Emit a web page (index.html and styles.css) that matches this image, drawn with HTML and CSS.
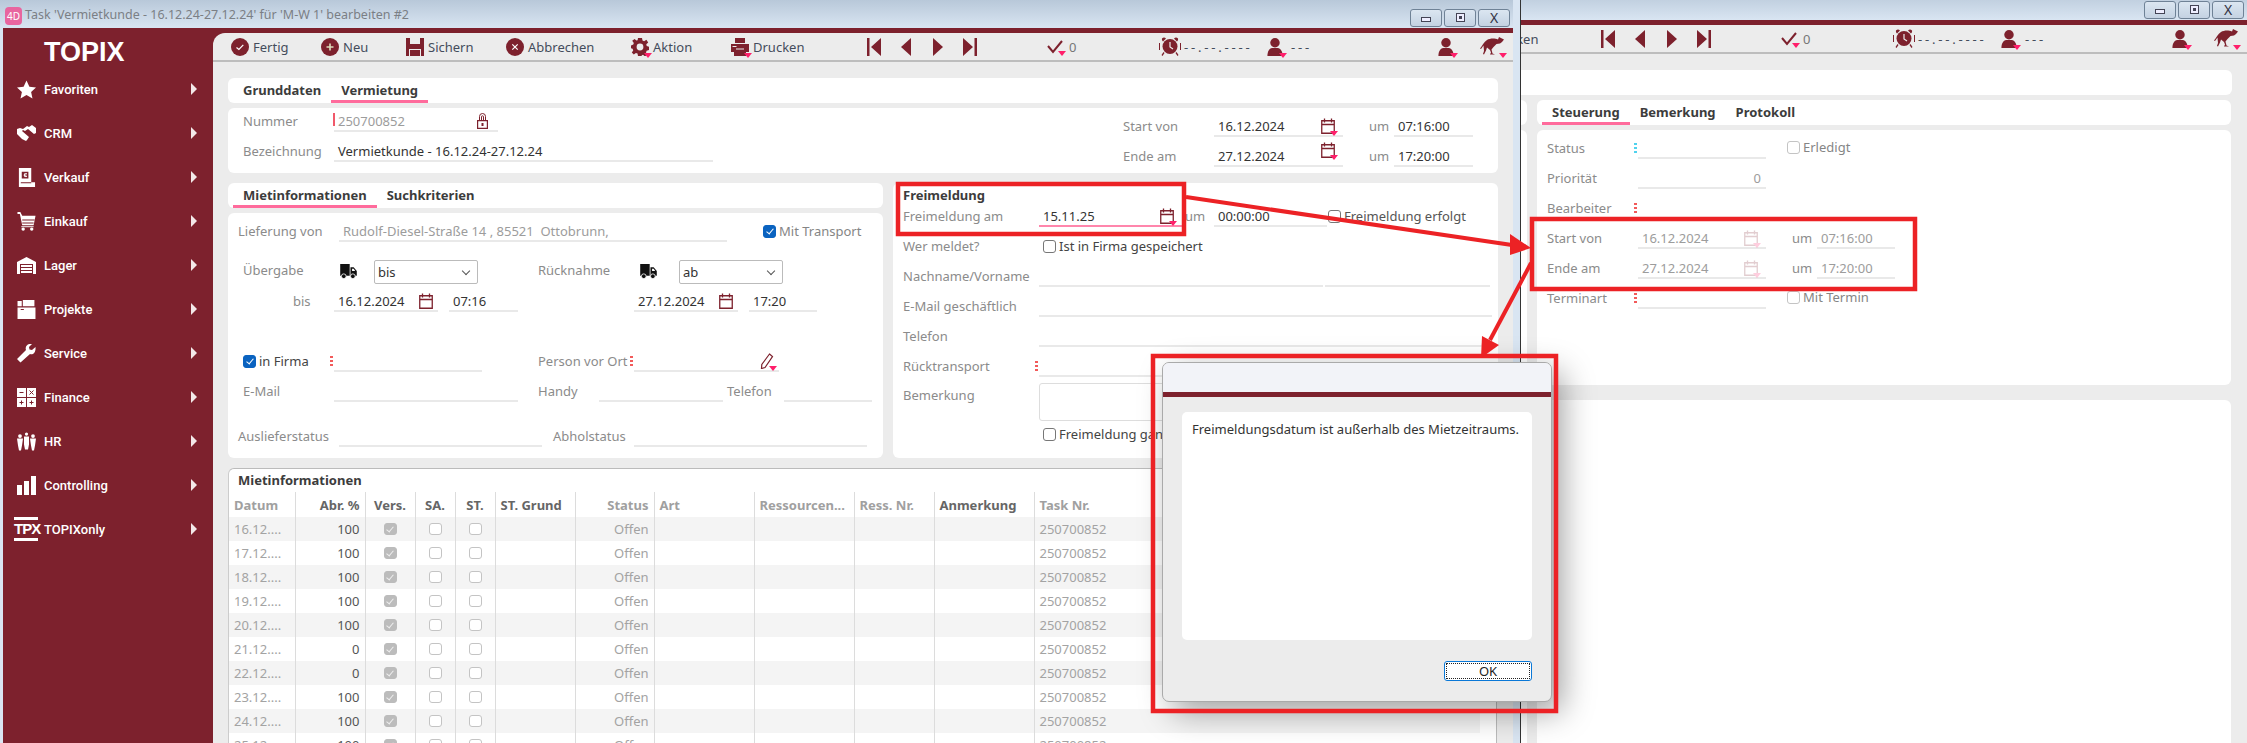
FILE: index.html
```html
<!DOCTYPE html>
<html lang="de">

<head>
    <meta charset="UTF-8">
    <title>TOPIX - Task Vermietkunde</title>
    <link rel="stylesheet" href="styles.css">
</head>

<body>
    <svg class="defs" xmlns="http://www.w3.org/2000/svg">
        <symbol id="i-ok" viewBox="0 0 18 18"><circle cx="9" cy="9" r="9" fill="currentColor"/><path d="M5.5 9.5l2.4 2 4.4-4.6" fill="none" stroke="#fff" stroke-width="1.2"/></symbol>
        <symbol id="i-plus" viewBox="0 0 18 18"><circle cx="9" cy="9" r="9" fill="currentColor"/><path d="M9 5.5v7M5.5 9h7" stroke="#ddb" stroke-width="1.6"/></symbol>
        <symbol id="i-x" viewBox="0 0 18 18"><circle cx="9" cy="9" r="9" fill="currentColor"/><path d="M6.3 6.3l5.4 5.4M11.7 6.3l-5.4 5.4" stroke="#fff" stroke-width="1.2"/></symbol>
        <symbol id="i-save" viewBox="0 0 18 18"><path d="M0 0h18v18H0z" fill="currentColor"/><path d="M4 0h10v6H4zM3 11h12v7h-1v-6H4v6H3z" fill="#ececec"/></symbol>
        <symbol id="i-gear" viewBox="0 0 18 18"><path fill="currentColor" fill-rule="evenodd" d="M7 0h4l.5 2.6 1.6.7L15.400 1.800l1.800 2.600-1.900 1.800.4 1.700 2.300.8v3.400l-2.400.6-.6 1.700 1.500 2.200-2.600 1.800-1.900-1.600-1.600.6L11 18H7l-.5-2.400-1.600-.6L2.800 16.600.8 14.500l1.400-2-.6-1.800L0 10.300V7.400l2.300-.8.500-1.700L1.200 2.800 3.600 1l1.800 1.600L6.600 2.200zM9 5.600a3.400 3.400 0 1 0 0 6.800 3.400 3.400 0 0 0 0-6.800z"/></symbol>
        <symbol id="i-print" viewBox="0 0 18 18"><path fill="currentColor" d="M4 0h10v5H4zM0 6h18v8h-3v4H3v-4H0z"/><path d="M1.500 8.500h4M5 11h8" stroke="#ececec" stroke-width="1.200"/></symbol>
        <symbol id="i-first" viewBox="0 0 14 18"><path fill="currentColor" d="M0 0h2.500v18H0zM14 0v18L4 9z"/></symbol>
        <symbol id="i-prev" viewBox="0 0 10 18"><path fill="currentColor" d="M10 0v18L0 9z"/></symbol>
        <symbol id="i-next" viewBox="0 0 10 18"><path fill="currentColor" d="M0 0v18l10-9z"/></symbol>
        <symbol id="i-last" viewBox="0 0 14 18"><path fill="currentColor" d="M14 0h-2.500v18H14zM0 0v18l10-9z"/></symbol>
        <symbol id="i-check" viewBox="0 0 16 14"><path d="M1 6l5 6 9-11" fill="none" stroke="currentColor" stroke-width="2"/></symbol>
        <symbol id="i-clock" viewBox="0 0 22 19"><path fill="currentColor" d="M3 1.500a3 3 0 0 1 4 0L4 4.500a3 3 0 0 1-1-3zM19 1.500a3 3 0 0 0-4 0l3 3a3 3 0 0 0 1-3zM0 6h1v7H0zM21 6h1v7h-1zM4.500 15l1 1-2 3-1-1zM17.500 15l-1 1 2 3 1-1z"/><circle cx="11" cy="9.500" r="7.500" fill="currentColor"/><path d="M11 5v5l3 2" fill="none" stroke="#ececec" stroke-width="1.200"/></symbol>
        <symbol id="i-person" viewBox="0 0 18 19"><circle cx="9" cy="5" r="5" fill="currentColor"/><path fill="currentColor" d="M1 19c0-5 2-8 5-8.500h6c3 .5 5 3.500 5 8.500z"/></symbol>
        <symbol id="i-roo" viewBox="0 0 24 19"><path fill="currentColor" d="M24 2.500L19 0l-1 2.500c-3-1.500-8-1.500-11 .5C4 5 2 9 0 11.500l1 .5 2.500-3.500L4 14l-1 3 1 .5 2-4 1-3 3 2.500 1 2.500-1 2h5l-2.500-1-1-4 2-2.500 3-3 3.500-.5 2-1.500z"/></symbol>
        <symbol id="i-cal" viewBox="0 0 14 16"><path d="M.75 2.750h12.500v12.500H.75zM.75 6.500h12.500M3.500 .5v4M10.500 .5v4" fill="none" stroke="currentColor" stroke-width="1.300"/></symbol>
        <symbol id="i-lock" viewBox="0 0 11 16"><path d="M2.500 7V3.500a3 3 0 0 1 6 0V7M4.500 7V3.800a1 1 0 0 1 2 0V7" fill="none" stroke="currentColor" stroke-width="1"/><path d="M.6 7.600h9.800v7.800H.6z" fill="#fff" stroke="currentColor" stroke-width="1.200"/><path d="M4.500 10h2v3h-2z" fill="currentColor"/></symbol>
        <symbol id="i-truck" viewBox="0 0 21 19"><path fill="#111" d="M0 0h12v15H0zM13 4h4l4 5v6h-8z"/><circle cx="4.500" cy="15.500" r="3" fill="#111" stroke="#fff"/><circle cx="16" cy="15.500" r="3" fill="#111" stroke="#fff"/><path d="M15 6h2l2 3h-4z" fill="#fff"/></symbol>
        <symbol id="i-pen" viewBox="0 0 14 16"><path d="M9.500 1l3 2.500L5 14.500l-3.500 1 .3-4z" fill="none" stroke="currentColor" stroke-width="1.200"/></symbol>
        <symbol id="s-star" viewBox="0 0 19 18"><path fill="#fff" d="M9.500 0l2.900 6.200 6.600.7-4.900 4.500 1.400 6.600-6-3.400-6 3.400 1.400-6.600L0 6.900l6.600-.7z"/></symbol>
        <symbol id="s-hand" viewBox="0 0 19 17"><path fill="#fff" d="M0 4l3-1 3 1 4-3 2 1 3-2 4 3v5l-2 1-6-5-3 2-2-1-1 1 7 6-2 3-1 1-2-1-2-1-1-1-4-4z"/></symbol>
        <symbol id="s-bill" viewBox="0 0 18 20"><path fill="#fff" d="M1 0h13v15h4v5H1z"/><path fill="#7d212d" d="M4 4h7v7H4zM3 15h11v1H3z"/><path d="M9.500 6H7v3h2.500M6 7.500h3" stroke="#fff" fill="none"/></symbol>
        <symbol id="s-cart" viewBox="0 0 19 20"><path fill="#fff" d="M0 0h3l2 4h14l-2 10H5L2.500 2H0z"/><path fill="#7d212d" d="M5 8h13v1H5zM5 11h12v1H5z"/><circle cx="6" cy="18" r="1.800" fill="#fff"/><circle cx="15" cy="18" r="1.800" fill="#fff"/><path fill="#fff" d="M4 15h13v1H4z"/></symbol>
        <symbol id="s-store" viewBox="0 0 19 17"><path fill="#fff" d="M0 5l9.500-5L19 5v12H0z"/><path fill="#7d212d" d="M3 7h13v10H3z"/><path fill="#fff" d="M4 8h11v2H4zM4 11h11v2H4zM4 14h11v2H4z"/></symbol>
        <symbol id="s-folder" viewBox="0 0 17 18"><path fill="#fff" d="M5 0h11v6H5zM0 1h4v5H0zM0 7h17v11H0z"/><path fill="#7d212d" d="M3 8.500h3v1H3z"/></symbol>
        <symbol id="s-wrench" viewBox="0 0 19 19"><path fill="#fff" d="M18.500 3l-3.500 3-2.500-.6L12 3l3-3c-3-.8-6 1-6.300 4-.1 1 .1 1.500.3 2L0 15l3.500 3.500L13 10c3 1 6-1.500 5.500-7z"/></symbol>
        <symbol id="s-calc" viewBox="0 0 19 19"><path fill="#fff" d="M0 0h9v9H0zM10 0h9v9h-9zM0 10h9v9H0zM10 10h9v9h-9z"/><path d="M2.500 4.500h4M12.500 2.500l4 4M16.500 2.500l-4 4M2.500 14.500h4M4.500 12.500v4M12.500 14.500h4M14.500 12.500v4" stroke="#7d212d"/></symbol>
        <symbol id="s-people" viewBox="0 0 19 18"><circle cx="9.500" cy="1.600" r="1.600" fill="#fff"/><circle cx="3" cy="3.600" r="1.900" fill="#fff"/><circle cx="16" cy="3.600" r="1.900" fill="#fff"/><path fill="#fff" d="M0 6h6l-1 7-1 5H2l-1-5zM13 6h6l-1 7-1 5h-2l-1-5zM7 4h5v8l-1 5H8l-1-5z"/></symbol>
        <symbol id="s-bars" viewBox="0 0 19 19"><path fill="#fff" d="M0 9h5v10H0zM7 5h5v14H7zM14 0h5v19h-5z"/></symbol>
    </svg>

    <div class="window back">
        <div class="titlebar">
            <div class="win-buttons">
                <span class="win-btn"><i class="g-min"></i></span>
                <span class="win-btn"><i class="g-max"></i></span>
                <span class="win-btn"><i class="g-close">X</i></span>
            </div>
        </div>
        <div class="frame">
            <div class="main">
                <div class="toolbar">
                    <span class="tool"></span><span class="tool"></span><span class="tool"></span><span class="tool"></span><span class="tool"></span>
                    <span class="tool"><span class="mk"><svg class="ico"><use href="#i-print"/></svg></span><span>Drucken</span></span>
                    <span class="tool"><svg class="ico n14"><use href="#i-first"/></svg></span>
                    <span class="tool"><svg class="ico n10"><use href="#i-prev"/></svg></span>
                    <span class="tool"><svg class="ico n10"><use href="#i-next"/></svg></span>
                    <span class="tool"><svg class="ico n14"><use href="#i-last"/></svg></span>
                    <span class="tool gap6"><span class="mk"><svg class="ico c16"><use href="#i-check"/></svg></span><span class="zero">0</span></span>
                    <span class="tool gap3"><svg class="ico k22"><use href="#i-clock"/></svg><span class="dash">--.--.----</span></span>
                    <span class="tool gap7"><span class="mk"><svg class="ico"><use href="#i-person"/></svg></span><span class="dash">---</span></span>
                    <span class="tool"><span class="mk"><svg class="ico"><use href="#i-person"/></svg></span></span>
                    <span class="tool"><span class="mk"><svg class="ico r24"><use href="#i-roo"/></svg></span></span>
                </div>
                <div class="content">
                    <div class="panel tabs-empty"></div>
                    <div class="back-cols">
                        <div class="panel tabs-empty"></div>
                        <div class="panel tabs">
                            <span class="tab on">Steuerung</span><span class="tab">Bemerkung</span><span class="tab">Protokoll</span>
                        </div>
                        <div class="panel back-form-left"></div>
                        <div class="panel back-form">
                            <div class="row br-a"><span class="lbl lbl-dots">Status<i class="dots cyan"></i></span><span class="field"></span><span></span><label class="chk"><i class="box"></i>Erledigt</label></div>
                            <div class="row br-a"><span class="lbl">Priorität</span><span class="field end muted">0</span></div>
                            <div class="row br-a"><span class="lbl lbl-dots">Bearbeiter<i class="dots"></i></span><span class="field"></span></div>
                            <div class="row br-b"><span class="lbl">Start von</span><span class="field muted">16.12.2024<span class="mk faint"><svg class="ico cal"><use href="#i-cal"/></svg></span></span><span class="lbl um-l">um</span><span class="field muted">07:16:00</span></div>
                            <div class="row br-b"><span class="lbl">Ende am</span><span class="field muted">27.12.2024<span class="mk faint"><svg class="ico cal"><use href="#i-cal"/></svg></span></span><span class="lbl um-l">um</span><span class="field muted">17:20:00</span></div>
                            <div class="row br-a"><span class="lbl lbl-dots">Terminart<i class="dots"></i></span><span class="field"></span><span></span><label class="chk"><i class="box"></i>Mit Termin</label></div>
                        </div>
                        <div class="panel back-low"></div>
                        <div class="panel back-low"></div>
                    </div>
                </div>
            </div>
        </div>
    </div>

    <div class="window front">
        <div class="titlebar">
            <span class="app-icon">4D</span>
            <span class="title-text">Task 'Vermietkunde - 16.12.24-27.12.24' für 'M-W 1' bearbeiten #2</span>
            <div class="win-buttons">
                <span class="win-btn"><i class="g-min"></i></span>
                <span class="win-btn"><i class="g-max"></i></span>
                <span class="win-btn"><i class="g-close">X</i></span>
            </div>
        </div>
        <div class="frame">
            <aside class="sidebar">
                <div class="logo">TOPIX</div>
                <ul class="menu">
                    <li><svg class="side-ico"><use href="#s-star"/></svg><span>Favoriten</span><i class="arrow"></i></li>
                    <li><svg class="side-ico"><use href="#s-hand"/></svg><span>CRM</span><i class="arrow"></i></li>
                    <li><svg class="side-ico"><use href="#s-bill"/></svg><span>Verkauf</span><i class="arrow"></i></li>
                    <li><svg class="side-ico"><use href="#s-cart"/></svg><span>Einkauf</span><i class="arrow"></i></li>
                    <li><svg class="side-ico"><use href="#s-store"/></svg><span>Lager</span><i class="arrow"></i></li>
                    <li><svg class="side-ico"><use href="#s-folder"/></svg><span>Projekte</span><i class="arrow"></i></li>
                    <li><svg class="side-ico"><use href="#s-wrench"/></svg><span>Service</span><i class="arrow"></i></li>
                    <li><svg class="side-ico"><use href="#s-calc"/></svg><span>Finance</span><i class="arrow"></i></li>
                    <li><svg class="side-ico"><use href="#s-people"/></svg><span>HR</span><i class="arrow"></i></li>
                    <li><svg class="side-ico"><use href="#s-bars"/></svg><span>Controlling</span><i class="arrow"></i></li>
                    <li><span class="tpx">TPX</span><span>TOPIXonly</span><i class="arrow"></i></li>
                </ul>
            </aside>
            <div class="main">
                <div class="toolbar">
                    <span class="tool"><svg class="ico"><use href="#i-ok"/></svg><span>Fertig</span></span>
                    <span class="tool"><svg class="ico"><use href="#i-plus"/></svg><span>Neu</span></span>
                    <span class="tool"><svg class="ico"><use href="#i-save"/></svg><span>Sichern</span></span>
                    <span class="tool"><svg class="ico"><use href="#i-x"/></svg><span>Abbrechen</span></span>
                    <span class="tool"><span class="mk"><svg class="ico"><use href="#i-gear"/></svg></span><span>Aktion</span></span>
                    <span class="tool"><span class="mk"><svg class="ico"><use href="#i-print"/></svg></span><span>Drucken</span></span>
                    <span class="tool"><svg class="ico n14"><use href="#i-first"/></svg></span>
                    <span class="tool"><svg class="ico n10"><use href="#i-prev"/></svg></span>
                    <span class="tool"><svg class="ico n10"><use href="#i-next"/></svg></span>
                    <span class="tool"><svg class="ico n14"><use href="#i-last"/></svg></span>
                    <span class="tool gap6"><span class="mk"><svg class="ico c16"><use href="#i-check"/></svg></span><span class="zero">0</span></span>
                    <span class="tool gap3"><svg class="ico k22"><use href="#i-clock"/></svg><span class="dash">--.--.----</span></span>
                    <span class="tool gap7"><span class="mk"><svg class="ico"><use href="#i-person"/></svg></span><span class="dash">---</span></span>
                    <span class="tool"><span class="mk"><svg class="ico"><use href="#i-person"/></svg></span></span>
                    <span class="tool"><span class="mk"><svg class="ico r24"><use href="#i-roo"/></svg></span></span>
                </div>
                <div class="content">
                    <div class="panel tabs">
                        <span class="tab">Grunddaten</span><span class="tab on">Vermietung</span>
                    </div>
                    <div class="panel head">
                        <div class="head-left">
                            <div class="row hl-a"><span class="lbl">Nummer</span><span class="field muted red-bar">250700852<svg class="ico lock"><use href="#i-lock"/></svg></span></div>
                            <div class="row hl-b"><span class="lbl">Bezeichnung</span><span class="field">Vermietkunde - 16.12.24-27.12.24</span></div>
                        </div>
                        <div class="head-right">
                            <div class="row hr"><span class="lbl">Start von</span><span class="field">16.12.2024<span class="mk"><svg class="ico cal"><use href="#i-cal"/></svg></span></span><span class="lbl um-l">um</span><span class="field">07:16:00</span></div>
                            <div class="row hr"><span class="lbl">Ende am</span><span class="field">27.12.2024<span class="mk cal-up"><svg class="ico cal"><use href="#i-cal"/></svg></span></span><span class="lbl um-l">um</span><span class="field">17:20:00</span></div>
                        </div>
                    </div>
                    <div class="split">
                        <div class="split-left">
                            <div class="panel tabs">
                                <span class="tab on">Mietinformationen</span><span class="tab">Suchkriterien</span>
                            </div>
                            <div class="panel miet">
                                <div class="row m-a"><span class="lbl">Lieferung von</span><span class="field muted">Rudolf-Diesel-Straße 14 , 85521&nbsp; Ottobrunn,</span><span></span><label class="chk"><i class="box on"></i><span class="lbl-c">Mit Transport</span></label></div>
                                <div class="row m-b"><span class="lbl">Übergabe</span><svg class="ico truck"><use href="#i-truck"/></svg><span class="select">bis<i class="chev"></i></span><span></span><span class="lbl">Rücknahme</span><svg class="ico truck"><use href="#i-truck"/></svg><span class="select">ab<i class="chev"></i></span></div>
                                <div class="row m-c"><span class="lbl bis-l">bis</span><span class="field">16.12.2024<span class="mk nomark"><svg class="ico cal"><use href="#i-cal"/></svg></span></span><span></span><span class="field">07:16</span><span></span><span class="field">27.12.2024<span class="mk nomark"><svg class="ico cal"><use href="#i-cal"/></svg></span></span><span></span><span class="field">17:20</span></div>
                                <div class="row m-d"><span class="lbl lbl-dots"><label class="chk"><i class="box on"></i>in Firma</label><i class="dots"></i></span><span class="field"></span><span></span><span class="lbl lbl-dots">Person vor Ort<i class="dots"></i></span><span class="field end"><span class="mk"><svg class="ico pen"><use href="#i-pen"/></svg></span></span></div>
                                <div class="row m-e"><span class="lbl">E-Mail</span><span class="field"></span><span></span><span class="lbl">Handy</span><span class="field"></span><span></span><span class="lbl">Telefon</span><span class="field"></span></div>
                                <div class="row m-f"><span class="lbl">Auslieferstatus</span><span class="field"></span><span></span><span class="lbl">Abholstatus</span><span class="field"></span></div>
                            </div>
                        </div>
                        <div class="panel frei">
                            <div class="frei-title">Freimeldung</div>
                            <div class="row f-a"><span class="lbl">Freimeldung am</span><span class="field pink">15.11.25<span class="mk"><svg class="ico cal"><use href="#i-cal"/></svg></span></span><span class="lbl">um</span><span class="field">00:00:00</span><label class="chk"><i class="box"></i><span class="lbl-d">Freimeldung erfolgt</span></label></div>
                            <div class="row f-b"><span class="lbl">Wer meldet?</span><label class="chk chk-in"><i class="box"></i>Ist in Firma gespeichert</label></div>
                            <div class="row f-c"><span class="lbl">Nachname/Vorname</span><span class="field"></span><span class="field"></span></div>
                            <div class="row f-b"><span class="lbl">E-Mail geschäftlich</span><span class="field"></span></div>
                            <div class="row f-b"><span class="lbl">Telefon</span><span class="field"></span></div>
                            <div class="row f-b"><span class="lbl lbl-dots">Rücktransport<i class="dots"></i></span><span class="field"></span></div>
                            <div class="row f-d"><span class="lbl">Bemerkung</span><span class="area"></span></div>
                            <div class="row f-e"><span class="lbl"></span><label class="chk chk-in"><i class="box"></i>Freimeldung ganz</label></div>
                        </div>
                    </div>
                    <div class="table-panel">
                        <div class="table-title">Mietinformationen</div>
                        <table class="grid-table">
                            <colgroup>
                                <col class="c66"><col class="c70"><col class="c50"><col class="c40"><col class="c40"><col class="c80"><col class="c79"><col class="c100"><col class="c100"><col class="c80"><col class="c100"><col>
                            </colgroup>
                            <thead>
                                <tr><th class="light">Datum</th><th class="r">Abr. %</th><th class="m">Vers.</th><th class="m">SA.</th><th class="m">ST.</th><th>ST. Grund</th><th class="r light">Status</th><th class="light">Art</th><th class="light">Ressourcen...</th><th class="light">Ress. Nr.</th><th>Anmerkung</th><th class="light">Task Nr.</th></tr>
                            </thead>
                            <tbody>
                                <tr><td>16.12....</td><td class="r dk">100</td><td class="m"><i class="cb on"></i></td><td class="m"><i class="cb"></i></td><td class="m"><i class="cb"></i></td><td></td><td class="r">Offen</td><td></td><td></td><td></td><td></td><td>250700852</td></tr>
                                <tr><td>17.12....</td><td class="r dk">100</td><td class="m"><i class="cb on"></i></td><td class="m"><i class="cb"></i></td><td class="m"><i class="cb"></i></td><td></td><td class="r">Offen</td><td></td><td></td><td></td><td></td><td>250700852</td></tr>
                                <tr><td>18.12....</td><td class="r dk">100</td><td class="m"><i class="cb on"></i></td><td class="m"><i class="cb"></i></td><td class="m"><i class="cb"></i></td><td></td><td class="r">Offen</td><td></td><td></td><td></td><td></td><td>250700852</td></tr>
                                <tr><td>19.12....</td><td class="r dk">100</td><td class="m"><i class="cb on"></i></td><td class="m"><i class="cb"></i></td><td class="m"><i class="cb"></i></td><td></td><td class="r">Offen</td><td></td><td></td><td></td><td></td><td>250700852</td></tr>
                                <tr><td>20.12....</td><td class="r dk">100</td><td class="m"><i class="cb on"></i></td><td class="m"><i class="cb"></i></td><td class="m"><i class="cb"></i></td><td></td><td class="r">Offen</td><td></td><td></td><td></td><td></td><td>250700852</td></tr>
                                <tr><td>21.12....</td><td class="r dk">0</td><td class="m"><i class="cb on"></i></td><td class="m"><i class="cb"></i></td><td class="m"><i class="cb"></i></td><td></td><td class="r">Offen</td><td></td><td></td><td></td><td></td><td>250700852</td></tr>
                                <tr><td>22.12....</td><td class="r dk">0</td><td class="m"><i class="cb on"></i></td><td class="m"><i class="cb"></i></td><td class="m"><i class="cb"></i></td><td></td><td class="r">Offen</td><td></td><td></td><td></td><td></td><td>250700852</td></tr>
                                <tr><td>23.12....</td><td class="r dk">100</td><td class="m"><i class="cb on"></i></td><td class="m"><i class="cb"></i></td><td class="m"><i class="cb"></i></td><td></td><td class="r">Offen</td><td></td><td></td><td></td><td></td><td>250700852</td></tr>
                                <tr><td>24.12....</td><td class="r dk">100</td><td class="m"><i class="cb on"></i></td><td class="m"><i class="cb"></i></td><td class="m"><i class="cb"></i></td><td></td><td class="r">Offen</td><td></td><td></td><td></td><td></td><td>250700852</td></tr>
                                <tr><td>25.12....</td><td class="r dk">100</td><td class="m"><i class="cb on"></i></td><td class="m"><i class="cb"></i></td><td class="m"><i class="cb"></i></td><td></td><td class="r">Offen</td><td></td><td></td><td></td><td></td><td>250700852</td></tr>
                            </tbody>
                        </table>
                    </div>
                </div>
            </div>
        </div>
    </div>

    <div class="dialog">
        <div class="dialog-head"></div>
        <div class="dialog-band"></div>
        <div class="dialog-body">
            <div class="dialog-msg">Freimeldungsdatum ist außerhalb des Mietzeitraums.</div>
            <div class="dialog-actions"><button class="ok-btn"><span>OK</span></button></div>
        </div>
    </div>

    <!-- red annotations drawn on top of the screenshot -->
    <svg class="annot" viewBox="0 0 2247 743">
        <rect x="898" y="184" width="286" height="50"/>
        <rect x="1532" y="219" width="383" height="70"/>
        <rect x="1153" y="356" width="403" height="355"/>
        <line x1="1186" y1="197" x2="1512" y2="245"/>
        <polygon class="head" points="1531,248 1510,234 1510,255"/>
        <line x1="1531" y1="263" x2="1490" y2="340"/>
        <polygon class="head" points="1481,358 1482,336 1499,345"/>
    </svg>
</body>

</html>
```
FILE: styles.css
```css
* {
    box-sizing: border-box;
}

body {
    margin: 0;
    height: 743px;
    overflow: hidden;
    position: relative;
    background: #ececec;
    font-family: "Noto Sans", "DejaVu Sans", sans-serif;
    font-size: 13px;
    color: #333;
}

.defs {
    position: absolute;
    width: 0;
    height: 0;
}

/* windows */
.window {
    position: absolute;
    width: 1513px;
    height: 751px;
    display: flex;
    flex-direction: column;
    overflow: hidden;
    background: #7d212d;
}

.window.front {
    left: 0;
    top: 0;
    height: 743px;
    box-shadow: 7px 0 0 #d9e5f2, 8px 0 0 #333;
}

.window.front {
    overflow: visible;
}

.window.back {
    left: 734px;
    top: -8px;
}

.titlebar {
    height: 28px;
    flex: none;
    display: flex;
    align-items: center;
    padding-left: 5px;
    background: linear-gradient(#b8c8d9, #d9e5f2);
}

.app-icon {
    width: 17px;
    height: 18px;
    margin-top: 3px;
    border-radius: 4px;
    background: #e8659f;
    color: #fff;
    font-size: 10px;
    line-height: 18px;
    text-align: center;
}

.title-text {
    margin-left: 3px;
    color: #7b7f85;
    font-size: 12.5px;
}

.win-buttons {
    margin-left: auto;
    margin-right: 3px;
    margin-top: 3px;
    display: flex;
    gap: 2px;
    align-items: flex-start;
    height: 22px;
}

.win-btn {
    width: 32px;
    height: 18px;
    border: 1px solid #6f8296;
    border-radius: 3px;
    background: linear-gradient(#dbe6f1, #c4d2e2);
    display: flex;
    align-items: center;
    justify-content: center;
    margin-top: 4px;
}

.g-min {
    width: 10px;
    height: 5px;
    margin-top: 4px;
    border: 1px solid #445;
    background: #eef;
}

.g-max {
    width: 9px;
    height: 9px;
    border: 1px solid #445;
    background: linear-gradient(#445, #445) center / 3px 3px no-repeat #eef;
}

.g-close {
    font-style: normal;
    font-size: 14px;
    line-height: 14px;
    color: #334;
}

.back .titlebar {
    padding-left: 0;
}

.frame {
    flex: 1;
    min-height: 0;
    display: flex;
    padding-top: 5px;
    background: #7d212d;
}

.front .frame {
    border-left: 3px solid #d9e5f2;
}

.back .frame {
    padding-left: 213px;
}

/* sidebar */
.sidebar {
    width: 210px;
    flex: none;
    color: #fff;
}

.logo {
    height: 34px;
    padding: 5px 0 0 41px;
    font-family: "Liberation Sans", sans-serif;
    font-weight: bold;
    font-size: 27px;
    line-height: 29px;
}

.menu {
    list-style: none;
    margin: 0;
    padding: 0;
}

.menu li {
    height: 44px;
    display: flex;
    align-items: center;
    font-family: Roboto, sans-serif;
    font-weight: 500;
    font-size: 13px;
    padding-left: 14px;
}

.side-ico {
    width: 19px;
    height: 19px;
    margin-right: 8px;
    flex: none;
}

.tpx {
    width: 24px;
    margin: 0 6px 0 -3px;
    border-top: 3px solid #fff;
    border-bottom: 3px solid #fff;
    font-family: "Liberation Sans", sans-serif;
    font-weight: bold;
    font-size: 15px;
    line-height: 18px;
    letter-spacing: -1px;
}

.arrow {
    margin-left: auto;
    margin-right: 16px;
    border-left: 6px solid #f3e8e8;
    border-top: 6px solid transparent;
    border-bottom: 6px solid transparent;
}

/* main area */
.main {
    flex: 1;
    min-width: 0;
    display: flex;
    flex-direction: column;
    background: #ececec;
    border-top-left-radius: 12px;
}

.toolbar {
    height: 29px;
    flex: none;
    padding-left: 18px;
    display: grid;
    grid-template-columns: 90px 85px 100px 125px 100px 136px 34px 32px 30px 84px 112px 107px 171px 43px auto;
    align-items: center;
    border-bottom: 2px solid #bdbdbd;
    color: #444c5c;
    font-size: 13px;
}

.tool {
    display: flex;
    align-items: center;
    gap: 4px;
    height: 20px;
}

.gap3 {
    gap: 3px;
}

.gap6 {
    gap: 6px;
}

.gap7 {
    gap: 7px;
}

.zero {
    color: #777;
}

.dash {
    letter-spacing: 2.8px;
}

.ico {
    width: 18px;
    height: 18px;
    flex: none;
    color: #7d212d;
    display: block;
}

.ico.n14 {
    width: 14px;
}

.ico.n10 {
    width: 10px;
}

.ico.c16 {
    width: 16px;
    height: 14px;
}

.ico.k22 {
    width: 22px;
    height: 19px;
}

.ico.r24 {
    width: 24px;
    height: 19px;
}

.ico.cal {
    width: 14px;
    height: 16px;
}

.ico.lock {
    width: 11px;
    height: 16px;
}

.ico.truck {
    width: 21px;
    height: 15px;
    margin-bottom: 5px;
}

.ico.pen {
    width: 14px;
    height: 16px;
}

/* small pink drop marker on icons */
.mk {
    position: relative;
    display: block;
    flex: none;
}

.mk::after {
    content: "";
    position: absolute;
    right: -3px;
    bottom: -2px;
    border-top: 5px solid #ff1f6b;
    border-left: 4px solid transparent;
    border-right: 4px solid transparent;
}

.mk.nomark::after {
    display: none;
}

.mk.faint {
    opacity: .22;
}

.mk.cal-up {
    margin-bottom: 12px;
}

.content {
    flex: 1;
    min-height: 0;
    padding: 16px 15px 0;
    overflow: hidden;
}

.panel {
    background: #fff;
    border-radius: 6px;
}

.tabs,
.tabs-empty {
    height: 25px;
    padding-left: 5px;
    display: flex;
}

.tabs-empty {
    margin-bottom: 5px;
}

.tabs {
    margin-bottom: 5px;
}

.tab {
    padding: 0 10px;
    height: 25px;
    line-height: 25px;
    font-weight: bold;
    color: #3c3c3c;
}

.tab.on {
    border-bottom: 3px solid #ff6b9c;
}

.head {
    height: 65px;
    display: flex;
    justify-content: space-between;
    padding: 0 25px 0 15px;
    margin-bottom: 10px;
}

.row {
    display: grid;
    align-items: end;
}

.lbl {
    height: 20px;
    padding-bottom: 2px;
    display: flex;
    align-items: center;
    color: #8b8b8b;
    white-space: nowrap;
}

.lbl-c {
    color: #858585;
}

.lbl-d {
    color: #555;
}

.lbl-dots {
    justify-content: space-between;
    padding-right: 1px;
}

.dots {
    width: 3px;
    height: 10px;
    background: repeating-linear-gradient(#f25a5a 0 2px, transparent 2px 4px);
}

.dots.cyan {
    background: repeating-linear-gradient(#4fd2ee 0 2px, transparent 2px 4px);
}

.field {
    height: 20px;
    padding: 0 5px 0 4px;
    display: flex;
    align-items: center;
    justify-content: space-between;
    border-bottom: 2px solid #e9e9e9;
    white-space: nowrap;
    color: #333;
}

.field.end {
    justify-content: flex-end;
}

.field.pink {
    border-bottom-color: #ff86ac;
}

.field .mk {
    margin-right: 3px;
}

.field.pink .mk {
    margin-right: 5px;
}

.field .mk.nomark,
.field.end .mk {
    margin-right: 0;
}

.field.red-bar {
    position: relative;
    padding-right: 10px;
}

.field.red-bar::before {
    content: "";
    position: absolute;
    left: -1px;
    top: 1px;
    width: 2px;
    height: 13px;
    background: #f1596a;
}

.muted {
    color: #9c9c9c;
}

.field.muted {
    color: #9c9c9c;
}

.hl-a {
    margin-top: 4px;
    grid-template-columns: 91px 164px;
}

.hl-b {
    margin-top: 10px;
    grid-template-columns: 91px 379px;
}

.head-right {
    padding-top: 9px;
}

.hr {
    grid-template-columns: 91px 129px 51px 79px;
    margin-bottom: 10px;
}

.um-l {
    padding-left: 26px;
}

.split {
    display: flex;
    gap: 10px;
    margin-bottom: 10px;
}

.split-left {
    width: 655px;
}

.miet {
    height: 245px;
    padding: 9px 0 0 10px;
}

.m-a {
    grid-template-columns: 101px 388px 36px auto;
}

.m-b,
.m-c,
.m-d,
.m-e {
    margin-left: 5px;
}

.m-b {
    margin-top: 18px;
    grid-template-columns: 95px 36px 104px 60px 100px 41px 104px;
}

.m-b .lbl {
    margin-bottom: 3px;
}

.m-c {
    margin-top: 8px;
    grid-template-columns: 91px 104px 11px 69px 116px 104px 11px 68px;
}

.bis-l {
    padding-left: 50px;
}

.m-d {
    margin-top: 40px;
    grid-template-columns: 91px 148px 56px 96px 145px;
}

.m-e {
    margin-top: 10px;
    grid-template-columns: 91px 184px 20px 61px 124px 4px 57px 88px;
}

.m-f {
    margin-top: 25px;
    grid-template-columns: 101px 203px 11px 81px 233px;
}

.select {
    height: 24px;
    padding-left: 3px;
    display: flex;
    align-items: center;
    justify-content: space-between;
    border: 1px solid #bbb;
    border-radius: 2px;
    color: #333;
}

.chev {
    width: 6px;
    height: 6px;
    margin: -3px 8px 0 0;
    border-right: 1px solid #555;
    border-bottom: 1px solid #555;
    transform: rotate(45deg);
}

.chk {
    height: 20px;
    padding-bottom: 2px;
    display: flex;
    align-items: center;
    gap: 3px;
    color: #444;
    white-space: nowrap;
}

.lbl .chk {
    height: 18px;
    padding-bottom: 0;
}

.chk-in {
    margin-left: 4px;
}

.box {
    width: 13px;
    height: 13px;
    flex: none;
    border: 1px solid #777;
    border-radius: 3px;
    background: #fff;
}

.box.on {
    border-color: #0a63c0;
    background: #0a63c0;
    position: relative;
}

.box.on::after {
    content: "";
    position: absolute;
    left: 3.5px;
    top: 1.5px;
    width: 3px;
    height: 6px;
    border-right: 1px solid #fff;
    border-bottom: 1px solid #fff;
    transform: rotate(40deg);
}

/* freimeldung */
.frei {
    width: 605px;
    height: 275px;
    padding-left: 10px;
}

.frei-title {
    height: 24px;
    line-height: 24px;
    font-weight: bold;
    color: #3c3c3c;
}

.f-a {
    grid-template-columns: 136px 145px 30px 113px auto;
}

.f-a .chk {
    margin-left: 1px;
}

.f-a .lbl:nth-child(3) {
    padding-left: 1px;
}

.f-b {
    margin-top: 10px;
    grid-template-columns: 136px 453px;
}

.f-c {
    margin-top: 10px;
    grid-template-columns: 136px 284px 167px;
}

.f-c .field:last-child {
    margin-left: 2px;
}

.f-d {
    margin-top: 6px;
    grid-template-columns: 136px 452px;
    align-items: start;
}

.f-d .lbl {
    margin-top: 3px;
}

.area {
    height: 38px;
    border: 1px solid #ddd;
    border-radius: 3px;
}

.f-e {
    margin-top: 4px;
    grid-template-columns: 136px auto;
}

/* table */
.table-panel {
    width: 1269px;
    height: 300px;
    background: #fff;
    border-top: 1px solid #bbb;
    border-left: 1px solid #ccc;
    border-right: 1px solid #bbb;
    border-top-left-radius: 6px;
}

.table-title {
    height: 23px;
    line-height: 23px;
    padding-left: 9px;
    font-weight: bold;
    color: #3c3c3c;
}

.grid-table {
    width: 1251px;
    table-layout: fixed;
    border-collapse: collapse;
}

.c66 { width: 66px; }
.c70 { width: 70px; }
.c50 { width: 50px; }
.c40 { width: 40px; }
.c80 { width: 80px; }
.c79 { width: 79px; }
.c100 { width: 100px; }

.grid-table th,
.grid-table td {
    padding: 0 5px;
    border-left: 1px solid #dcdcdc;
    text-align: left;
    white-space: nowrap;
    overflow: hidden;
}

.grid-table th:first-child,
.grid-table td:first-child {
    border-left: 0;
}

.grid-table th {
    height: 25px;
    color: #666;
    font-weight: bold;
}

.grid-table th.light {
    color: #a0a0a0;
}

.grid-table td {
    height: 24px;
    color: #a3a3a3;
}

.grid-table tbody tr:nth-child(odd) {
    background: #f4f4f4;
}

.grid-table .r {
    text-align: right;
}

.grid-table .m {
    text-align: center;
    padding: 0;
}

.grid-table td.dk {
    color: #555;
}

.cb {
    display: inline-block;
    width: 13px;
    height: 12px;
    margin-top: 4px;
    border: 1px solid #c4c4c4;
    border-radius: 3px;
    background: #fff;
}

.cb.on {
    background: #bcbcbc;
    border-color: #bcbcbc;
    position: relative;
}

.cb.on::after {
    content: "";
    position: absolute;
    left: 3.5px;
    top: 1px;
    width: 3px;
    height: 6px;
    border-right: 1px solid #eee;
    border-bottom: 1px solid #eee;
    transform: rotate(40deg);
}

/* back window panels */
.back-cols {
    display: grid;
    grid-template-columns: 565px 694px;
    column-gap: 10px;
    grid-template-rows: 25px 255px 360px;
    row-gap: 5px;
}

.back-low {
    margin-top: 10px;
}

.back-form {
    padding: 9px 0 0 10px;
}

.br-a {
    grid-template-columns: 91px 128px 21px auto;
    margin-bottom: 10px;
}

.br-a .chk {
    height: 16px;
    align-self: start;
    padding-bottom: 0;
    color: #858585;
}

.br-a .box {
    border-color: #c4c4c4;
}

.br-b {
    grid-template-columns: 91px 128px 51px 78px;
    margin-bottom: 10px;
}

/* dialog */
.dialog {
    position: absolute;
    left: 1162px;
    top: 362px;
    width: 390px;
    height: 340px;
    display: flex;
    flex-direction: column;
    overflow: hidden;
    background: #ececec;
    border: 1px solid #aaa;
    border-radius: 7px;
    box-shadow: 10px 10px 32px rgba(0, 0, 0, .38);
}

.dialog-head {
    height: 29px;
    background: #f2f3f8;
}

.dialog-band {
    height: 5px;
    background: #7d212d;
}

.dialog-body {
    flex: 1;
    padding: 15px 19px 0 19px;
}

.dialog-msg {
    height: 228px;
    padding: 8px 10px;
    background: #fff;
    border-radius: 5px;
    color: #333;
}

.dialog-actions {
    margin-top: 21px;
    display: flex;
    justify-content: flex-end;
}

.ok-btn {
    width: 88px;
    height: 20px;
    padding: 1px;
    background: #fff;
    border: 1px solid #0a78d7;
    border-radius: 3px;
    font: inherit;
    color: #222;
}

.ok-btn span {
    display: block;
    height: 16px;
    line-height: 15px;
    border: 1px dotted #222;
}

/* annotation layer */
.annot {
    position: absolute;
    left: 0;
    top: 0;
    width: 2247px;
    height: 743px;
    pointer-events: none;
}

.annot rect {
    fill: none;
    stroke: #ec2225;
    stroke-width: 4.5;
}

.annot line {
    stroke: #ec2225;
    stroke-width: 4;
}

.annot .head {
    fill: #ec2225;
}
```
